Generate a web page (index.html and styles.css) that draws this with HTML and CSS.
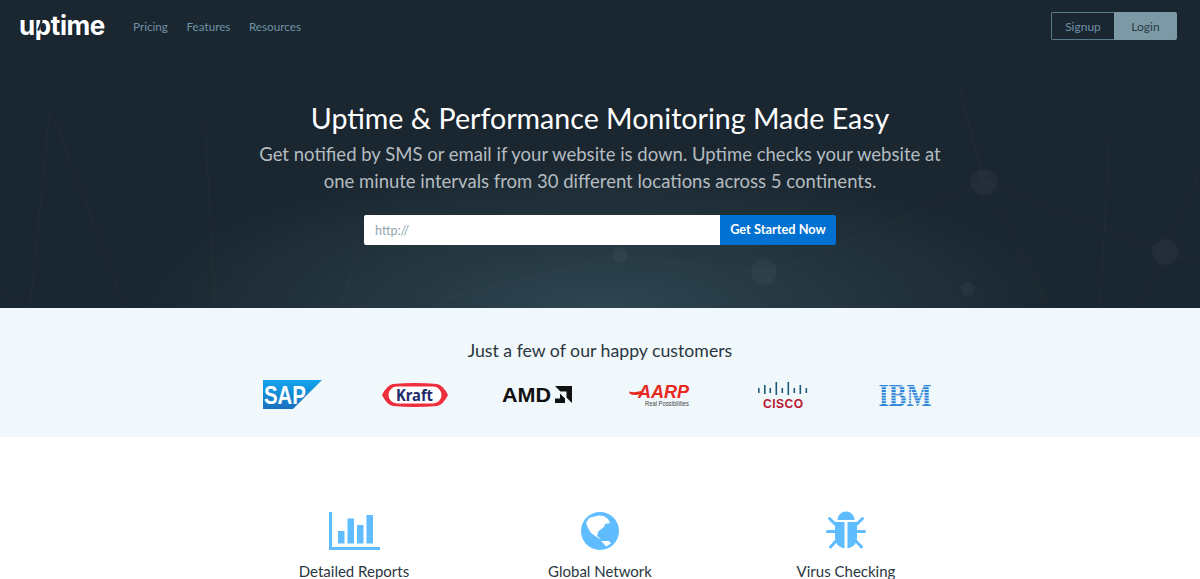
FILE: index.html
```html
<!DOCTYPE html>
<html lang="en">
  <head>
    <title>Uptime - Uptime &amp; Performance Monitoring Made Easy</title>
    <link rel="stylesheet" href="styles.css">
  </head>
  <body>
  <section class="hero">
    <svg class="hero-net" viewBox="0 0 1200 308" width="1200" height="308" aria-hidden="true">
      <g class="net-lines">
        <path d="M984 182 L1165 252 L1200 262"/>
        <path d="M984 182 L1050 308"/>
        <path d="M984 182 L800 262 L764 272"/>
        <path d="M984 182 L960 90"/>
        <path d="M1165 252 L1135 308"/>
        <path d="M1165 252 L1200 170"/>
        <path d="M1110 130 L1100 308"/>
        <path d="M50 110 L30 308"/>
        <path d="M55 120 L125 308"/>
        <path d="M205 120 L215 308"/>
        <path d="M0 290 L25 308"/>
        <path d="M375 210 L340 308"/>
        <path d="M400 275 L360 308"/>
        <path d="M764 272 L620 255 L440 300"/>
        <path d="M764 272 L800 308"/>
      </g>
      <g class="net-nodes">
        <circle cx="984" cy="182" r="13"/>
        <circle cx="1165" cy="252" r="13"/>
        <circle cx="764" cy="272" r="13"/>
        <circle cx="968" cy="289" r="7"/>
        <circle cx="620" cy="255" r="8"/>
      </g>
    </svg>

    <div class="topbar">
      <a href="#" class="logo">uptime</a>
      <nav class="nav-links">
        <a href="#">Pricing</a>
        <a href="#">Features</a>
        <a href="#">Resources</a>
      </nav>
      <div class="auth-btns">
        <a href="#" class="btn-signup">Signup</a>
        <a href="#" class="btn-login">Login</a>
      </div>
    </div>

    <div class="hero-body">
      <h1>Uptime &amp; Performance Monitoring Made Easy</h1>
      <p>Get notified by SMS or email if your website is down. Uptime checks your website at one minute intervals from 30 different locations across 5 continents.</p>
      <form class="signup-form">
        <input type="text" placeholder="http://">
        <button type="button">Get Started Now</button>
      </form>
    </div>
  </section>

  <section class="customers">
    <h2>Just a few of our happy customers</h2>
    <div class="logo-row">
      <svg class="cust-logo" width="60" height="30" viewBox="0 0 60 30" role="img" aria-label="SAP">
        <defs>
          <linearGradient id="sapBlue" x1="0" y1="0" x2="0" y2="1">
            <stop offset="0" stop-color="#12a5ec"/>
            <stop offset="1" stop-color="#1a6fbd"/>
          </linearGradient>
        </defs>
        <path d="M0 0 H59 L30 29 H0 Z" fill="url(#sapBlue)"/>
        <text x="1" y="24" class="sap-text" textLength="42" lengthAdjust="spacingAndGlyphs">SAP</text>
      </svg>

      <svg class="cust-logo" width="68" height="24" viewBox="0 0 68 24" role="img" aria-label="Kraft">
        <path d="M12 1 Q34 -1 56 1 Q62 2 67 12 Q62 22 56 23 Q34 25 12 23 Q6 22 1 12 Q6 2 12 1 Z" fill="#ee2d3d"/>
        <rect x="7.500" y="3.500" width="53" height="17" rx="8.500" fill="#fff"/>
        <text x="15" y="17.500" class="kraft-text" textLength="37" lengthAdjust="spacingAndGlyphs">Kraft</text>
      </svg>

      <svg class="cust-logo" width="71" height="18" viewBox="0 0 71 18" role="img" aria-label="AMD">
        <text x="0" y="16" class="amd-text" textLength="49" lengthAdjust="spacingAndGlyphs">AMD</text>
        <path d="M53 0 H70 V17 L64.500 11.500 V5.500 H58.500 Z" fill="#111"/>
        <path d="M58 7.500 V12.500 H53 V17 H63 L63 12.500 L58 7.500 Z" fill="#111"/>
      </svg>

      <svg class="cust-logo" width="62" height="26" viewBox="0 0 62 26" role="img" aria-label="AARP Real Possibilities">
        <path d="M0 9.500 Q6 11 12 9 L12 12 Q6 14 1 12 Z" fill="#e8281f"/>
        <text x="9" y="16" class="aarp-text" textLength="51" lengthAdjust="spacingAndGlyphs">AARP</text>
        <text x="16" y="24" class="aarp-sub" textLength="44" lengthAdjust="spacingAndGlyphs">Real Possibilities</text>
      </svg>

      <svg class="cust-logo" width="50" height="28" viewBox="0 0 50 28" role="img" aria-label="Cisco">
        <g fill="#1d5a75">
          <rect x="0" y="7" width="1.600" height="5"/>
          <rect x="6" y="4" width="1.600" height="9"/>
          <rect x="11.500" y="7" width="1.600" height="5"/>
          <rect x="17.500" y="1" width="1.600" height="13"/>
          <rect x="23.500" y="7" width="1.600" height="5"/>
          <rect x="29.500" y="1" width="1.600" height="13"/>
          <rect x="35.500" y="7" width="1.600" height="5"/>
          <rect x="41.500" y="4" width="1.600" height="9"/>
          <rect x="47.500" y="7" width="1.600" height="5"/>
        </g>
        <text x="5" y="27" class="cisco-text" textLength="40" lengthAdjust="spacing">CISCO</text>
      </svg>

      <svg class="cust-logo" width="54" height="22" viewBox="0 0 54 22" role="img" aria-label="IBM">
        <text x="0.500" y="21.500" class="ibm-text" textLength="53" lengthAdjust="spacingAndGlyphs">IBM</text>
        <g fill="#f1f8fc">
          <rect x="0" y="2.400" width="54" height="0.800"/>
          <rect x="0" y="5.200" width="54" height="0.800"/>
          <rect x="0" y="8" width="54" height="0.800"/>
          <rect x="0" y="10.800" width="54" height="0.800"/>
          <rect x="0" y="13.600" width="54" height="0.800"/>
          <rect x="0" y="16.400" width="54" height="0.800"/>
          <rect x="0" y="19.200" width="54" height="0.800"/>
        </g>
      </svg>
    </div>
  </section>

  <section class="features">
    <div class="feature">
      <svg width="52" height="40" viewBox="0 0 52 40" fill="#5fbcff" aria-hidden="true">
        <path d="M1 1 H4 V36 H52 V39 H1 Z"/>
        <rect x="10" y="20" width="6.500" height="12.500"/>
        <rect x="19.500" y="7.500" width="6.500" height="25"/>
        <rect x="29" y="14" width="6.500" height="18.500"/>
        <rect x="38.500" y="4" width="6.500" height="28.500"/>
      </svg>
      <div class="feature-name">Detailed Reports</div>
    </div>

    <div class="feature">
      <svg width="40" height="40" viewBox="0 0 40 40" aria-hidden="true">
        <circle cx="20" cy="20" r="19" fill="#5fbcff"/>
        <path d="M6 12 L9 7 L18 4.500 L24 5 L28 8 L30 12 L25 13 L24 16 L20 19 L18 21 L17 25 L21 28 L18 27 L11 22 L8 17 Z" fill="#fff"/>
        <path d="M21 30 L29 30 L31 32.500 L26 35.500 L24 33 Z" fill="#fff"/>
      </svg>
      <div class="feature-name">Global Network</div>
    </div>

    <div class="feature">
      <svg width="40" height="40" viewBox="0 0 40 40" aria-hidden="true">
        <path d="M11.500 9 A8.500 8.500 0 0 1 28.500 9 Z" fill="#5fbcff"/>
        <path d="M9 11 H18.500 V37.500 Q9 35 9 27 Z" fill="#5fbcff"/>
        <path d="M31 11 H21.500 V37.500 Q31 35 31 27 Z" fill="#5fbcff"/>
        <g stroke="#5fbcff" stroke-width="3" stroke-linecap="round">
          <path d="M9 13 L3.500 7.500"/>
          <path d="M31 13 L36.500 7.500"/>
          <path d="M8 20.500 H1.500"/>
          <path d="M32 20.500 H38.500"/>
          <path d="M10 30 L4.500 36"/>
          <path d="M30 30 L35.500 36"/>
        </g>
      </svg>
      <div class="feature-name">Virus Checking</div>
    </div>
  </section>
  </body>
</html>
```

FILE: styles.css
```css
* {
  margin: 0;
  padding: 0;
  box-sizing: border-box;
}

html, body {
  height: 579px;
  overflow: hidden;
}

body {
  font-family: 'Lato', 'Liberation Sans', sans-serif;
  background: #fff;
  color: #2a3640;
}

a {
  text-decoration: none;
}

.hero {
  position: relative;
  height: 308px;
  background: radial-gradient(ellipse 470px 150px at 50% 100%, #2e4552 0%, #24363f 50%, #1a2630 100%);
  background-color: #1a2630;
  overflow: hidden;
}

.hero-net {
  position: absolute;
  top: 0;
  left: 0;
}

.net-lines path {
  fill: none;
  stroke: #fff;
  stroke-opacity: 0.03;
  stroke-width: 1;
}

.net-nodes circle {
  fill: #fff;
  fill-opacity: 0.035;
}

.topbar {
  position: relative;
  display: flex;
  align-items: center;
  padding: 12px 23px 0 19px;
  height: 40px;
}

.logo {
  position: relative;
  font-family: 'Inter', sans-serif;
  font-size: 26px;
  font-weight: 700;
  color: #fff;
  letter-spacing: -0.4px;
  line-height: 28px;
  width: 114px;
}

/* slit through the bowl of the p */
.logo::after {
  content: "";
  position: absolute;
  left: 20px;
  top: 8px;
  width: 2px;
  height: 11px;
  background: #1a2630;
  transform: rotate(20deg);
}

.nav-links {
  display: flex;
  gap: 18.500px;
  flex: 1;
}

.nav-links a {
  font-size: 11.700px;
  color: #6f93a8;
}

.auth-btns {
  display: flex;
  height: 28px;
  font-size: 12px;
}

.auth-btns a {
  display: flex;
  align-items: center;
  justify-content: center;
}

.btn-signup {
  width: 63px;
  color: #6f93a8;
  border: 1px solid #58798a;
  border-right: 0;
  border-radius: 2px 0 0 2px;
}

.btn-login {
  width: 63px;
  color: #2a3b45;
  background: #7b9aa5;
  border-radius: 0 2px 2px 0;
}

.hero-body {
  position: relative;
  padding-top: 58px;
  text-align: center;
}

.hero-body h1 {
  font-size: 28.600px;
  font-weight: 400;
  line-height: 40px;
  color: #fff;
}

.hero-body p {
  width: 700px;
  margin: 3px auto 0;
  font-size: 18.500px;
  line-height: 27px;
  color: #b4bcc0;
}

.signup-form {
  display: flex;
  justify-content: center;
  margin-top: 20px;
}

.signup-form input {
  width: 356px;
  height: 30px;
  padding: 0 11px;
  border: 0;
  border-radius: 2px 0 0 2px;
  background: #fff;
  font-family: inherit;
  font-size: 12.500px;
  outline: none;
}

.signup-form input::placeholder {
  color: #8fa4ad;
}

.signup-form button {
  width: 116px;
  height: 30px;
  padding-bottom: 2px;
  border: 0;
  border-radius: 0 2px 2px 0;
  background: #0071d0;
  color: #fff;
  font-family: inherit;
  font-size: 12.800px;
  font-weight: 700;
}

.customers {
  height: 129px;
  padding-top: 32px;
  background: #f1f8fc;
  text-align: center;
}

.customers h2 {
  font-size: 17.700px;
  font-weight: 400;
  line-height: 22px;
  color: #2a3640;
}

.logo-row {
  display: grid;
  grid-template-columns: repeat(6, 122.4px);
  justify-content: center;
  align-items: center;
  height: 34px;
  margin-top: 16px;
  padding-right: 2px;
}

.cust-logo {
  justify-self: center;
  overflow: visible;
}

.sap-text {
  font-family: 'Liberation Sans', sans-serif;
  font-size: 25px;
  font-weight: 700;
  fill: #fff;
}

.kraft-text {
  font-family: 'Noto Sans', sans-serif;
  font-size: 16px;
  font-weight: 700;
  fill: #1d2a6b;
}

.amd-text {
  font-family: 'Liberation Sans', sans-serif;
  font-size: 20px;
  font-weight: 700;
  fill: #111;
}

.aarp-text {
  font-family: 'Liberation Sans', sans-serif;
  font-size: 18px;
  font-weight: 700;
  font-style: italic;
  fill: #e8281f;
}

.aarp-sub {
  font-family: 'Liberation Sans', sans-serif;
  font-size: 6.500px;
  fill: #444;
}

.cisco-text {
  font-family: 'Liberation Sans', sans-serif;
  font-size: 12px;
  font-weight: 700;
  fill: #b8172f;
}

.ibm-text {
  font-family: 'Liberation Serif', serif;
  font-size: 32px;
  font-weight: 700;
  fill: #2f86d8;
}

.features {
  display: grid;
  grid-template-columns: repeat(3, 246px);
  justify-content: center;
  padding-top: 74px;
  height: 142px;
}

.feature {
  display: flex;
  flex-direction: column;
  align-items: center;
}

.feature svg {
  display: block;
}

.feature-name {
  margin-top: 11px;
  font-size: 15px;
  line-height: 18px;
  color: #2a3640;
}
```
